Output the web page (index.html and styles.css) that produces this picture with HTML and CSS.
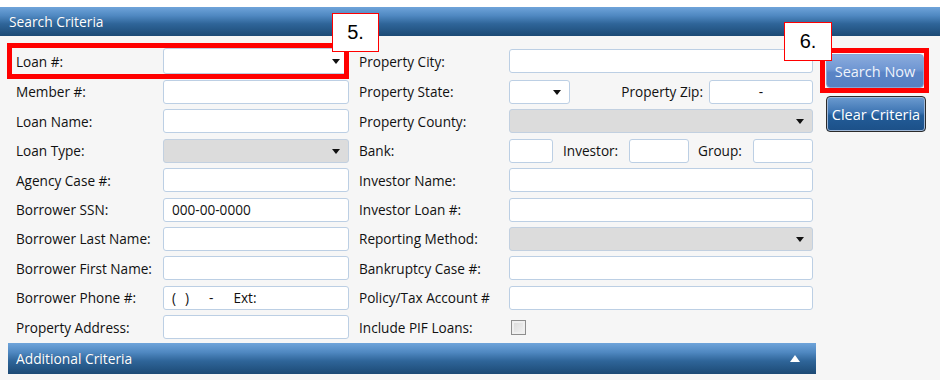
FILE: index.html
```html
<!DOCTYPE html>
<html lang="en">
<head>
    <meta charset="UTF-8">
    <title>Search Criteria</title>
    <link rel="stylesheet" href="styles.css">
</head>
<body>
    <div class="screen">
        <div class="bar bar-top">Search Criteria</div>
        <div class="panel">
            <div class="criteria">
                <div class="form">
                    <label class="lbl">Loan #:</label>
                    <div class="field select"><span class="arrow"></span></div>
                    <label class="lbl lbl-right">Property City:</label>
                    <div class="field"></div>

                    <label class="lbl">Member #:</label>
                    <div class="field"></div>
                    <label class="lbl lbl-right">Property State:</label>
                    <div class="inline">
                        <div class="field select state"><span class="arrow"></span></div>
                        <label class="lbl zip-lbl">Property Zip:</label>
                        <div class="field zip">-</div>
                    </div>

                    <label class="lbl">Loan Name:</label>
                    <div class="field"></div>
                    <label class="lbl lbl-right">Property County:</label>
                    <div class="field select disabled"><span class="arrow"></span></div>

                    <label class="lbl">Loan Type:</label>
                    <div class="field select disabled"><span class="arrow"></span></div>
                    <label class="lbl lbl-right">Bank:</label>
                    <div class="inline">
                        <div class="field bank"></div>
                        <label class="lbl investor-lbl">Investor:</label>
                        <div class="field small"></div>
                        <label class="lbl group-lbl">Group:</label>
                        <div class="field small"></div>
                    </div>

                    <label class="lbl">Agency Case #:</label>
                    <div class="field"></div>
                    <label class="lbl lbl-right">Investor Name:</label>
                    <div class="field"></div>

                    <label class="lbl">Borrower SSN:</label>
                    <div class="field text">000-00-0000</div>
                    <label class="lbl lbl-right">Investor Loan #:</label>
                    <div class="field"></div>

                    <label class="lbl">Borrower Last Name:</label>
                    <div class="field"></div>
                    <label class="lbl lbl-right">Reporting Method:</label>
                    <div class="field select disabled"><span class="arrow"></span></div>

                    <label class="lbl">Borrower First Name:</label>
                    <div class="field"></div>
                    <label class="lbl lbl-right">Bankruptcy Case #:</label>
                    <div class="field"></div>

                    <label class="lbl">Borrower Phone #:</label>
                    <div class="field text phone">
                        <span class="p1">(</span><span class="p2">)</span><span class="p3">-</span><span class="p4">Ext:</span>
                    </div>
                    <label class="lbl lbl-right">Policy/Tax Account #</label>
                    <div class="field"></div>

                    <label class="lbl">Property Address:</label>
                    <div class="field"></div>
                    <label class="lbl lbl-right">Include PIF Loans:</label>
                    <div class="check-cell"><span class="checkbox"></span></div>
                </div>
                <div class="actions">
                    <button class="btn btn-search">Search Now</button>
                    <button class="btn btn-clear">Clear Criteria</button>
                </div>
            </div>
            <div class="bar bar-sub">
                <span>Additional Criteria</span>
                <span class="caret"></span>
            </div>
        </div>

        <!-- annotation overlays -->
        <div class="mark mark-loan"></div>
        <div class="tag tag-5">5.</div>
        <div class="mark mark-search"></div>
        <div class="tag tag-6">6.</div>
    </div>
</body>
</html>
```

FILE: styles.css
```css
body {
    margin: 0;
    font-family: "Open Sans", "Noto Sans", Arial, sans-serif;
    font-size: 13.6px;
    color: #111111;
    background-color: #ffffff;
}
.screen {
    position: relative;
    width: 940px;
    height: 380px;
    padding-top: 7px;
    box-sizing: border-box;
    overflow: hidden;
}
.bar {
    display: flex;
    align-items: center;
    justify-content: space-between;
    color: #ffffff;
    font-size: 13.8px;
    background: linear-gradient(#6fa4da 0%, #4f88c1 30%, #2f6599 58%, #1c4a75 100%);
    text-shadow: 0 0 1px rgba(0, 0, 0, 0.2);
}
.bar-top {
    height: 29px;
    padding-left: 9px;
}
.panel {
    background-color: #f6f6f6;
    height: 344px;
}
.criteria {
    display: flex;
}
.form {
    display: grid;
    grid-template-columns: 147px 186px 160px 304px;
    grid-template-rows: 26.6px repeat(9, 24px);
    row-gap: 5.4px;
    padding: 12px 0 0 16px;
    align-items: center;
}
.lbl {
    white-space: nowrap;
}
.lbl-right {
    padding-left: 10px;
}
.field {
    height: 24px;
    box-sizing: border-box;
    background-color: #ffffff;
    border: 1px solid #bccfe4;
    border-radius: 3px;
    position: relative;
    display: flex;
    align-items: center;
}
.form > .field:first-of-type {
    height: 26px;
}
.field.text {
    padding-left: 8px;
}
.select.disabled {
    background-color: #dcdcdc;
    border-color: #c2d0e0;
}
.arrow {
    position: absolute;
    right: 8px;
    top: 50%;
    margin-top: -2px;
    border-left: 4px solid transparent;
    border-right: 4px solid transparent;
    border-top: 5px solid #111111;
}
.inline {
    display: flex;
    align-items: center;
}
.state {
    width: 61px;
}
.zip-lbl {
    margin-left: auto;
    margin-right: 6px;
}
.zip {
    width: 104px;
    justify-content: center;
}
.bank {
    width: 44px;
    margin-right: 10px;
}
.investor-lbl {
    width: 66px;
}
.group-lbl {
    width: 55px;
    margin-left: 9px;
}
.small {
    width: 60px;
}
.phone span {
    display: inline-block;
}
.phone .p2 {
    margin-left: 9px;
}
.phone .p3 {
    margin-left: 20px;
}
.phone .p4 {
    margin-left: 20px;
}
.check-cell {
    display: flex;
    align-items: center;
    padding-left: 2px;
}
.checkbox {
    width: 15px;
    height: 15px;
    box-sizing: border-box;
    border: 1px solid #8e8e8e;
    background: linear-gradient(135deg, #d8d8d8, #f4f4f4);
    box-shadow: inset 0 0 0 2px #efefef;
}
.actions {
    display: flex;
    flex-direction: column;
    align-items: flex-start;
    gap: 8px;
    padding: 18px 0 0 13px;
}
.btn {
    font-family: inherit;
    font-size: 14.5px;
    color: #ffffff;
    border-radius: 4px;
    padding: 0;
    cursor: pointer;
    white-space: nowrap;
}
.btn-search {
    width: 98px;
    height: 34px;
    color: #eef3fb;
    border: 1px solid #8aa6d2;
    background: linear-gradient(#8aabdc 0%, #7097d3 45%, #5a84c6 55%, #5780c2 100%);
}
.btn-clear {
    width: 100px;
    height: 36px;
    border: 1px solid #2b2b2b;
    box-shadow: inset 0 0 0 1px #9fb8d8;
    background: linear-gradient(#6c9bd0 0%, #3e75b3 45%, #225c98 55%, #1c5088 100%);
}
.bar-sub {
    margin: 4px 124px 0 8px;
    height: 31px;
    padding: 0 16px 0 8px;
}
.caret {
    border-left: 5px solid transparent;
    border-right: 5px solid transparent;
    border-bottom: 7px solid #ffffff;
}
.mark {
    position: absolute;
    border: 5px solid #ff0000;
    box-sizing: border-box;
}
.mark-loan {
    left: 7px;
    top: 43px;
    width: 342px;
    height: 36px;
}
.mark-search {
    left: 820px;
    top: 48px;
    width: 109px;
    height: 45px;
}
.tag {
    position: absolute;
    background-color: #ffffff;
    border: 1px solid #ff0000;
    box-sizing: border-box;
    font-family: "Liberation Sans", Arial, sans-serif;
    font-size: 20px;
    color: #000000;
    display: flex;
    align-items: center;
    justify-content: center;
}
.tag-5 {
    left: 332px;
    top: 13px;
    width: 47px;
    height: 39px;
}
.tag-6 {
    left: 784px;
    top: 22px;
    width: 48px;
    height: 39px;
}
```
